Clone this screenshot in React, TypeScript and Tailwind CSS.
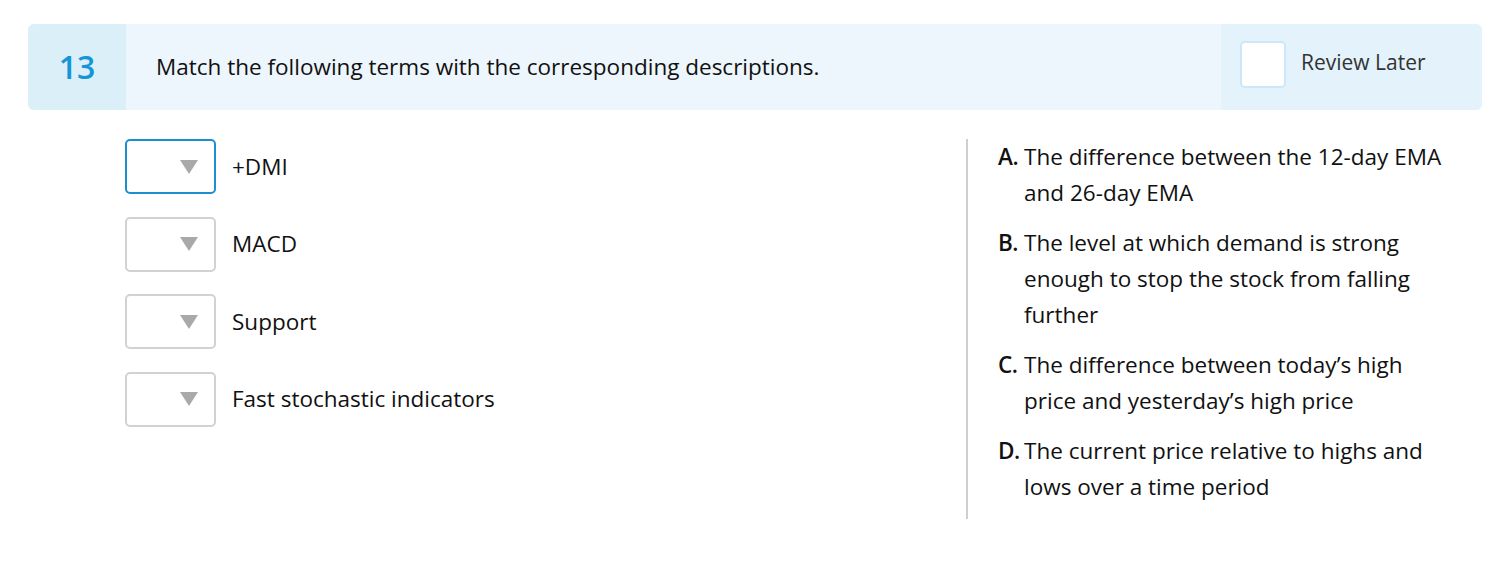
import React from "react";

const terms = ["+DMI", "MACD", "Support", "Fast stochastic indicators"];

const answers = [
  { key: "A", text: "The difference between the 12-day EMA and 26-day EMA" },
  { key: "B", text: "The level at which demand is strong enough to stop the stock from falling further" },
  { key: "C", text: "The difference between today’s high price and yesterday’s high price" },
  { key: "D", text: "The current price relative to highs and lows over a time period" },
];

const Dropdown: React.FC<{ active?: boolean }> = ({ active = false }) => (
  <div
    className={`flex h-[55px] w-[91px] shrink-0 items-center justify-end rounded-[5px] border-2 bg-white pr-[15px] ${
      active ? "border-[#1b8fcf]" : "border-[#d2d2d2]"
    }`}
  >
    <svg width="20" height="16" viewBox="0 0 20 16">
      <polygon points="1,1 19,1 10,15" fill="#a9a9a9" />
    </svg>
  </div>
);

export default function App() {
  return (
    <div className="min-h-[570px] bg-white pt-[24px] pl-[28px] font-['Open_Sans',sans-serif] text-[#111]">
      <div className="w-[1454px]">
        <div className="flex h-[86px] overflow-hidden rounded-[6px] bg-[#edf6fc]">
          <div className="flex w-[98px] items-center justify-center bg-[#dbeff9] text-[32px] font-semibold text-[#1496d6]">
            13
          </div>
          <div className="flex flex-1 items-center pl-[30px] text-[22.5px]">
            Match the following terms with the corresponding descriptions.
          </div>
          <div className="flex w-[261px] items-start bg-[#e3f2fb] pt-[17px] pl-[19px]">
            <div className="flex h-[47px] items-center gap-[15px]">
              <div className="h-[47px] w-[46px] rounded-[5px] border-2 border-[#cce7f6] bg-white" />
              <span className="mb-[4px] text-[21px] text-[#333]">Review Later</span>
            </div>
          </div>
        </div>

        <div className="mt-[29px] flex">
          <div className="flex w-[938px] flex-col gap-[22.5px] pl-[97px]">
            {terms.map((t, i) => (
              <div key={t} className="flex items-center gap-[16px]">
                <Dropdown active={i === 0} />
                <span className="text-[22.5px]">{t}</span>
              </div>
            ))}
          </div>
          <div className="w-[2px] bg-[#cfcfcf]" />
          <div className="flex w-[484px] flex-col pl-[30px] pr-[10px]">
            {answers.map((a) => (
              <div key={a.key} className="mb-[14px] flex text-[22.5px] leading-[36px]">
                <span className="w-[26px] shrink-0 whitespace-nowrap font-semibold tracking-[-0.5px]">{a.key}.</span>
                <span>{a.text}</span>
              </div>
            ))}
          </div>
        </div>
      </div>
    </div>
  );
}
